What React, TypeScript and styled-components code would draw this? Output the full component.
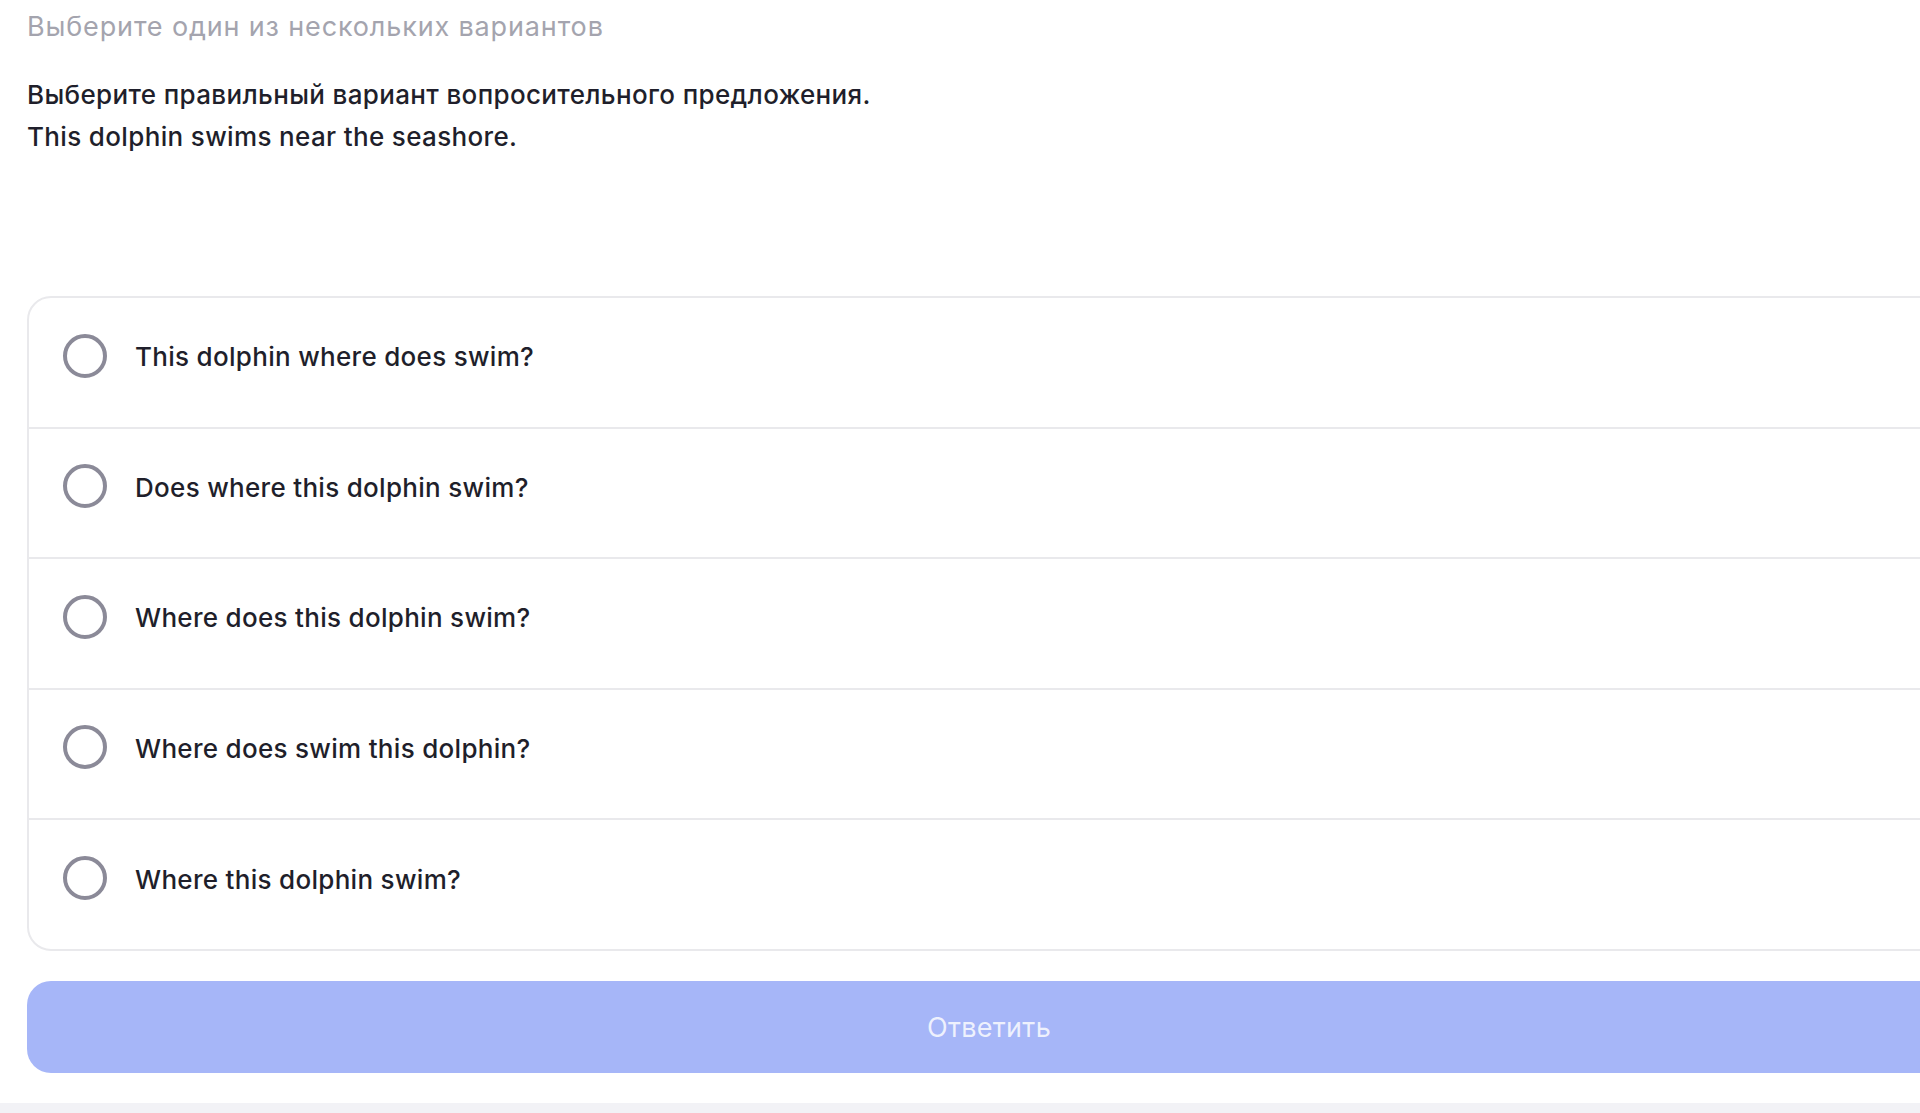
import React from "react";
import styled, { createGlobalStyle } from "styled-components";

const GlobalStyle = createGlobalStyle`
  html, body {
    margin: 0;
    padding: 0;
    background: #ffffff;
    overflow: hidden;
  }
  body {
    font-family: Inter, "Noto Sans", "Liberation Sans", sans-serif;
    -webkit-font-smoothing: antialiased;
  }
`;

const Page = styled.div`
  display: flex;
  flex-direction: column;
  width: 1951px;
  padding-top: 10px;
`;

const Content = styled.div`
  display: flex;
  flex-direction: column;
  width: 1924px;
  margin-left: 27px;
`;

const Hint = styled.div`
  font-size: 27px;
  line-height: 34px;
  font-weight: 400;
  letter-spacing: 0.85px;
  color: #a4a4ae;
`;

const Question = styled.div`
  margin-top: 30px;
  font-size: 26px;
  line-height: 42px;
  font-weight: 500;
  letter-spacing: 0.35px;
  color: #1f1f2b;
`;

const Card = styled.div`
  margin-top: 138px;
  border: 2px solid #e9e9ec;
  border-radius: 24px;
  display: flex;
  flex-direction: column;
  overflow: hidden;
`;

const Row = styled.label`
  display: flex;
  align-items: center;
  gap: 28px;
  height: 130.5px;
  padding: 0 0 13px 34px;
  box-sizing: border-box;
  border-bottom: 2px solid #e9e9ec;
  cursor: pointer;
  &:last-child {
    height: 129px;
    border-bottom: none;
  }
`;

const Radio = styled.span`
  width: 44px;
  height: 44px;
  box-sizing: border-box;
  border-radius: 50%;
  border: 4px solid #8b8a98;
  flex-shrink: 0;
`;

const OptionText = styled.span`
  font-size: 26px;
  font-weight: 500;
  letter-spacing: 0.3px;
  color: #1f1f2b;
  line-height: 32px;
  padding-top: 3px;
`;

const SubmitButton = styled.button`
  margin-top: 30px;
  height: 92px;
  border: none;
  border-radius: 24px;
  background: #a6b6f8;
  color: rgba(255, 255, 255, 0.82);
  font-family: Inter, "Noto Sans", "Liberation Sans", sans-serif;
  font-size: 27px;
  letter-spacing: 0.3px;
  font-weight: 400;
  cursor: default;
`;

const BottomStrip = styled.div`
  margin-top: 30px;
  height: 40px;
  background: #f2f2f6;
`;

const options = [
  "This dolphin where does swim?",
  "Does where this dolphin swim?",
  "Where does this dolphin swim?",
  "Where does swim this dolphin?",
  "Where this dolphin swim?",
];

export default function App() {
  return (
    <>
      <GlobalStyle />
      <Page>
        <Content>
          <Hint>Выберите один из нескольких вариантов</Hint>
          <Question>
            Выберите правильный вариант вопросительного предложения.
            <br />
            This dolphin swims near the seashore.
          </Question>
          <Card>
            {options.map((o) => (
              <Row key={o}>
                <Radio />
                <OptionText>{o}</OptionText>
              </Row>
            ))}
          </Card>
          <SubmitButton>Ответить</SubmitButton>
        </Content>
        <BottomStrip />
      </Page>
    </>
  );
}
